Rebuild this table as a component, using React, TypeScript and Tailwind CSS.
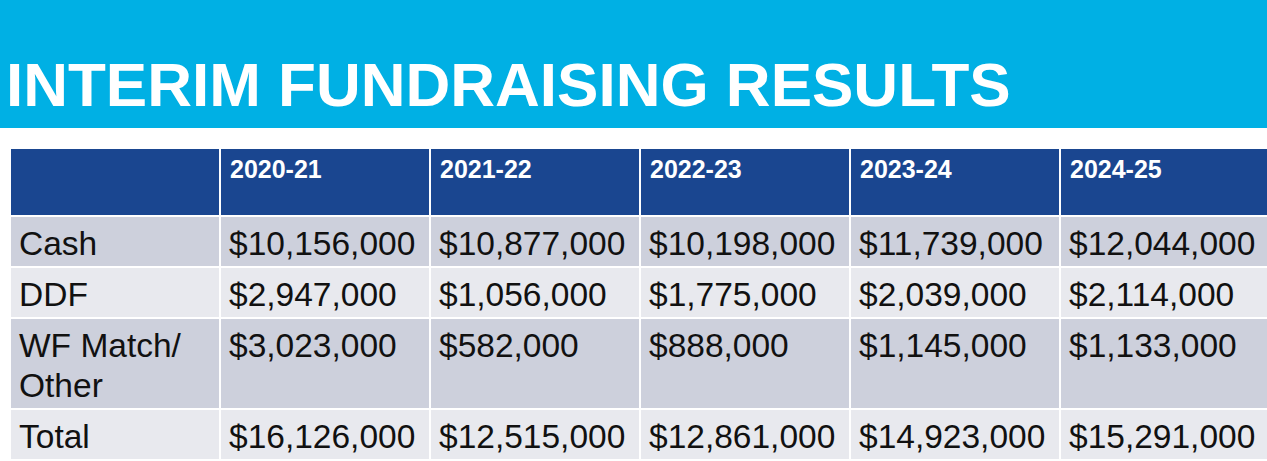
import * as React from 'react';

const years = ['2020-21', '2021-22', '2022-23', '2023-24', '2024-25'];

const rows = [
  { label: ['Cash'], values: ['$10,156,000', '$10,877,000', '$10,198,000', '$11,739,000', '$12,044,000'], tall: false, dark: true },
  { label: ['DDF'], values: ['$2,947,000', '$1,056,000', '$1,775,000', '$2,039,000', '$2,114,000'], tall: false, dark: false },
  { label: ['WF Match/', 'Other'], values: ['$3,023,000', '$582,000', '$888,000', '$1,145,000', '$1,133,000'], tall: true, dark: true },
  { label: ['Total'], values: ['$16,126,000', '$12,515,000', '$12,861,000', '$14,923,000', '$15,291,000'], tall: false, dark: false },
];

export default function App() {
  return (
    <div className="h-[461px] w-[1267px] overflow-hidden bg-white font-['Liberation_Sans',Arial,sans-serif]">
      {/* Title banner */}
      <div className="h-[128px] bg-[#00b0e4] pl-[6px] pt-[54px]">
        <h1 className="whitespace-nowrap text-[62px] font-bold leading-none text-white">INTERIM FUNDRAISING RESULTS</h1>
      </div>

      {/* Results table */}
      <div className="ml-[11px] mt-[21px] grid w-[1260px] grid-cols-[208px_208px_208px_208px_208px_208px] gap-[2px] bg-white">
        <div className="h-[66px] bg-[#1a4690]" />
        {years.map((y) => (
          <div key={y} className="h-[66px] bg-[#1a4690] pl-[9px] pt-[5px] text-[25px] font-bold leading-[30px] text-white">
            {y}
          </div>
        ))}

        {rows.map((r) => {
          const bg = r.dark ? 'bg-[#cdd0dc]' : 'bg-[#e8e9ee]';
          const h = r.tall ? 'h-[89px]' : 'h-[49px]';
          return (
            <React.Fragment key={r.label[0]}>
              <div className={`${bg} ${h} pl-[8px] pt-[7px] text-[33.5px] leading-[40px] text-[#111]`}>
                {r.label.map((l) => (
                  <div key={l}>{l}</div>
                ))}
              </div>
              {r.values.map((v, i) => (
                <div key={i} className={`${bg} ${h} whitespace-nowrap pl-[8px] pt-[7px] text-[33.5px] leading-[40px] text-[#111]`}>
                  {v}
                </div>
              ))}
            </React.Fragment>
          );
        })}
      </div>
    </div>
  );
}
